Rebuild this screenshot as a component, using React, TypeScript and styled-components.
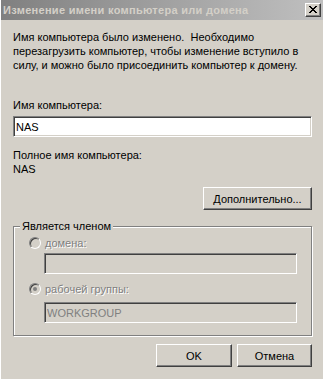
import React from 'react';
import styled, { createGlobalStyle } from 'styled-components';

const GlobalStyle = createGlobalStyle`
  html, body { margin: 0; padding: 0; background: #d4d0c8; }
  body { font-family: "Liberation Sans", Arial, sans-serif; font-size: 11px; color: #000; }
`;

const Window = styled.div`
  width: 323px;
  height: 379px;
  box-sizing: border-box;
  background: #d4d0c8;
  border-left: 1px solid #fff;
  display: flex;
  flex-direction: column;
  overflow: hidden;
`;

const TitleBar = styled.div`
  height: 20px;
  display: flex;
  align-items: center;
  justify-content: space-between;
  padding: 0 2px 0 2px;
  background: linear-gradient(to right, #808080, #c0c0c0);
`;

const Title = styled.span`
  font-weight: bold;
  font-size: 11px;
  letter-spacing: 0.3px;
  color: #d4d0c8;
  white-space: nowrap;
`;

const CloseButton = styled.div`
  width: 16px;
  height: 14px;
  box-sizing: border-box;
  background: #d4d0c8;
  border: 1px solid;
  border-color: #fff #404040 #404040 #fff;
  box-shadow: inset -1px -1px #808080;
  display: flex;
  align-items: center;
  justify-content: center;
  padding: 0 1px 1px 0;
`;

const Body = styled.div`
  display: flex;
  flex-direction: column;
  padding: 10px 11px 0 12px;
`;

const Text = styled.p<{ $top?: number }>`
  margin: ${(p) => p.$top ?? 0}px 0 0 0;
  line-height: 14px;
`;

const Field = styled.input<{ $top?: number; $indent?: number }>`
  display: block;
  box-sizing: border-box;
  height: 21px;
  margin: ${(p) => p.$top ?? 0}px 0 0 ${(p) => p.$indent ?? 0}px;
  padding: 0 2px;
  font-family: "Liberation Sans", Arial, sans-serif;
  font-size: 11px;
  color: #000;
  background: #fff;
  border: 1px solid;
  border-color: #808080 #fff #fff #808080;
  box-shadow: inset 1px 1px #404040, inset -1px -1px #d4d0c8;
  outline: none;

  &:disabled {
    background: #d4d0c8;
    color: #808080;
    -webkit-text-fill-color: #808080;
    opacity: 1;
  }
`;

const Button = styled.button<{ $width: number }>`
  width: ${(p) => p.$width}px;
  height: 23px;
  box-sizing: border-box;
  padding: 0;
  font-family: "Liberation Sans", Arial, sans-serif;
  font-size: 11px;
  color: #000;
  background: #d4d0c8;
  border: 1px solid;
  border-color: #fff #404040 #404040 #fff;
  box-shadow: inset -1px -1px #808080;
  border-radius: 0;
`;

const RightRow = styled.div<{ $top: number }>`
  display: flex;
  justify-content: flex-end;
  gap: 5px;
  margin-top: ${(p) => p.$top}px;
`;

const Group = styled.fieldset`
  margin: 9px 0 0 0;
  min-width: 0;
  padding: 3px 14px 12px 15px;
  border: 1px solid #808080;
  box-shadow: inset 1px 1px #fff, 1px 1px #fff;
  display: flex;
  flex-direction: column;
`;

const Legend = styled.legend`
  margin-left: -9px;
  padding: 0 2px;
  line-height: 14px;
  background: #d4d0c8;
`;

const RadioRow = styled.label<{ $top?: number }>`
  display: flex;
  align-items: center;
  gap: 4px;
  height: 14px;
  margin-top: ${(p) => p.$top ?? 0}px;
`;

const RadioDot = styled.span<{ $checked?: boolean }>`
  width: 12px;
  height: 12px;
  box-sizing: border-box;
  border-radius: 50%;
  border: 1px solid;
  border-color: #808080 #fff #fff #808080;
  box-shadow: inset 1px 1px #404040, inset -1px -1px #d4d0c8;
  background: #d4d0c8;
  display: flex;
  align-items: center;
  justify-content: center;

  &::after {
    content: '';
    display: ${(p) => (p.$checked ? 'block' : 'none')};
    width: 4px;
    height: 4px;
    border-radius: 50%;
    background: #808080;
  }
`;

const DisabledLabel = styled.span`
  color: #808080;
  text-shadow: 1px 1px 0 #fff;
`;

const CloseGlyph = () => (
  <svg width="8" height="7" viewBox="0 0 8 7" shapeRendering="crispEdges">
    <path d="M0 0h2v1h-2zM6 0h2v1h-2zM1 1h2v1h-2zM5 1h2v1h-2zM2 2h4v1h-4zM3 3h2v1h-2zM2 4h4v1h-4zM1 5h2v1h-2zM5 5h2v1h-2zM0 6h2v1h-2zM6 6h2v1h-2z" fill="#000" />
  </svg>
);

const App: React.FC = () => {
  return (
    <>
      <GlobalStyle />
      <Window>
        <TitleBar>
          <Title>Изменение имени компьютера или домена</Title>
          <CloseButton>
            <CloseGlyph />
          </CloseButton>
        </TitleBar>
        <Body>
          <Text>
            Имя компьютера было изменено.&nbsp; Необходимо
            <br />
            перезагрузить компьютер, чтобы изменение вступило в
            <br />
            силу, и можно было присоединить компьютер к домену.
          </Text>

          <Text $top={26}>Имя компьютера:</Text>
          <Field $top={4} defaultValue="NAS" />

          <Text $top={11}>Полное имя компьютера:</Text>
          <Text>NAS</Text>

          <RightRow $top={11}>
            <Button $width={109}>Дополнительно...</Button>
          </RightRow>

          <Group>
            <Legend>Является членом</Legend>
            <RadioRow>
              <RadioDot />
              <DisabledLabel>домена:</DisabledLabel>
            </RadioRow>
            <Field $top={3} $indent={15} disabled defaultValue="" />
            <RadioRow $top={8}>
              <RadioDot $checked />
              <DisabledLabel>рабочей группы:</DisabledLabel>
            </RadioRow>
            <Field $top={6} $indent={15} disabled defaultValue="WORKGROUP" />
          </Group>

          <RightRow $top={8}>
            <Button $width={76}>OK</Button>
            <Button $width={75}>Отмена</Button>
          </RightRow>
        </Body>
      </Window>
    </>
  );
};

export default App;
